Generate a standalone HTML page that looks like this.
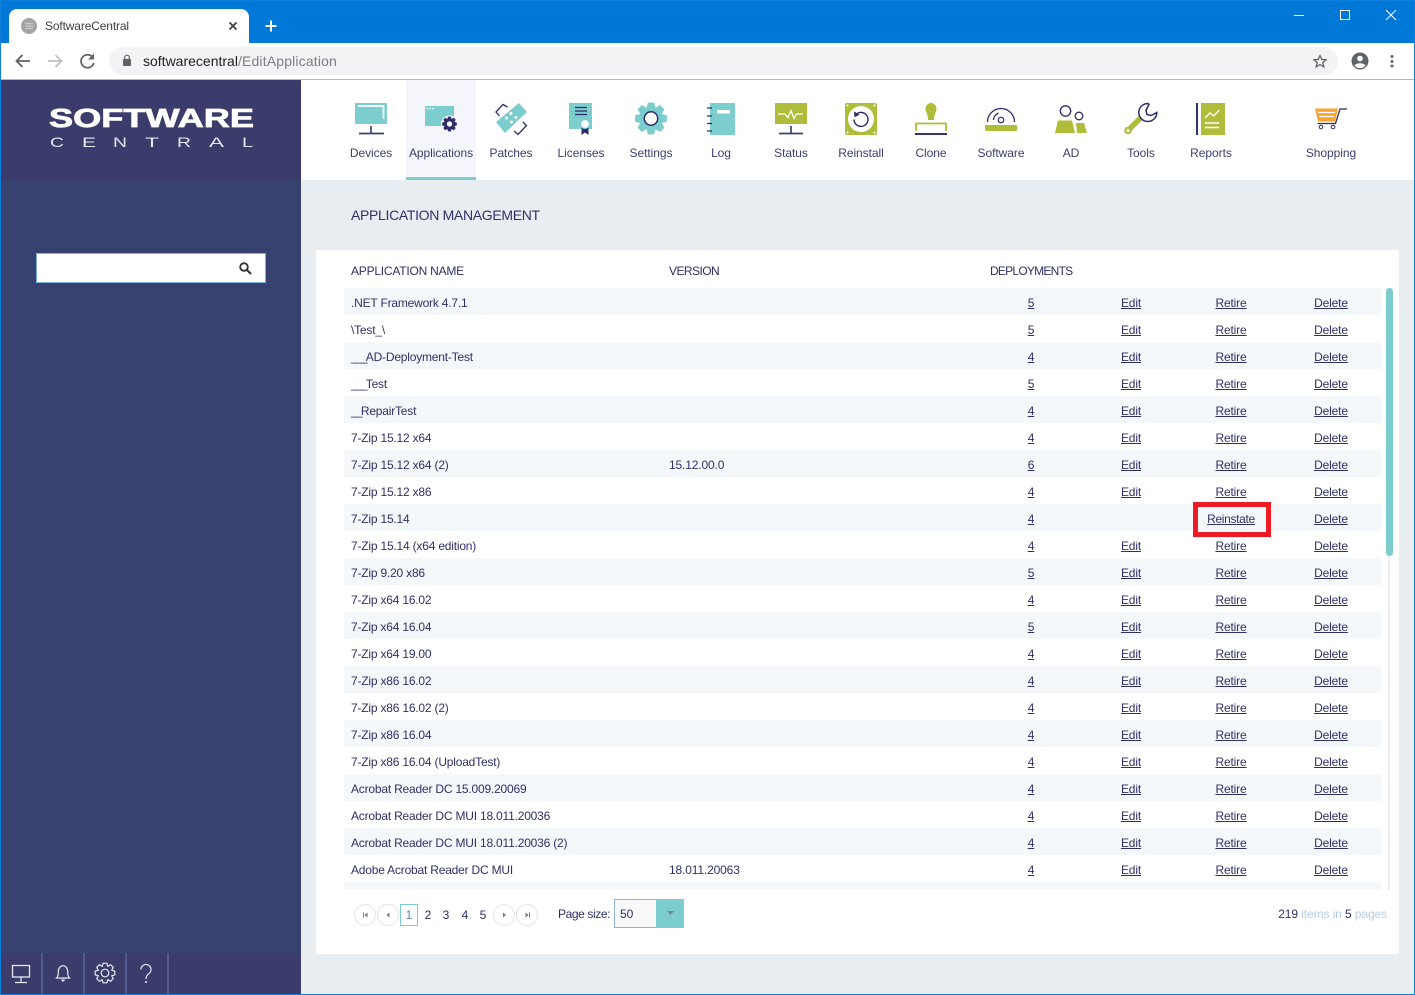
<!DOCTYPE html>
<html><head><meta charset="utf-8"><title>SoftwareCentral</title>
<style>
html,body{margin:0;padding:0;width:1415px;height:995px;overflow:hidden;background:#e8edf2;font-family:"Liberation Sans",sans-serif;font-size:12px;color:#2f3068}
.a{position:absolute}
#rows{position:absolute;left:344px;top:288px;width:1037px;height:602px;overflow:hidden}
.r{position:relative;height:27px;line-height:31px;white-space:nowrap}
.r:nth-child(odd){background:#f4f8fb}
.r i{font-style:normal;position:absolute;left:7px;letter-spacing:-.2px}
.r i b{font-weight:400;letter-spacing:-1.75px}
.r s{text-decoration:none;position:absolute;left:325px;letter-spacing:-.15px}
.r u{position:absolute;width:100px;text-align:center;text-decoration:none;letter-spacing:-.15px}
.r u span{text-decoration:underline}
.d{left:637px}.e{left:737px}.t{left:837px}.x{left:937px}
.n{position:absolute;top:146px;width:70px;text-align:center;color:#3b3f6e;line-height:14px;letter-spacing:-.05px}
.h{position:absolute;top:264px;line-height:14px;color:#2f3068;white-space:nowrap}
</style></head><body>
<!-- chrome -->
<div class="a" style="left:0;top:0;width:1415px;height:43px;background:#0078d7"></div>
<div class="a" style="left:9px;top:9px;width:240px;height:34px;background:#fff;border-radius:8px 8px 0 0"></div>
<div class="a" style="left:45px;top:19px;line-height:14px;color:#3c4043;letter-spacing:-.14px">SoftwareCentral</div>
<div class="a" style="left:0;top:43px;width:1415px;height:36px;background:#fff"></div>
<div class="a" style="left:0;top:79px;width:1415px;height:1px;background:#b9b9b9"></div>
<div class="a" style="left:109px;top:47px;width:1229px;height:28px;background:#f1f3f4;border-radius:14px"></div>
<div class="a" style="left:143px;top:53px;line-height:16px;font-size:14px;color:#202124;white-space:nowrap">softwarecentral<span style="color:#7b7f85;letter-spacing:.16px">/EditApplication</span></div>
<!-- sidebar -->
<div class="a" style="left:1px;top:80px;width:300px;height:100px;background:#3b3c6b"></div>
<div class="a" style="left:1px;top:180px;width:300px;height:773px;background:#374270"></div>
<div class="a" style="left:1px;top:953px;width:300px;height:41px;background:#3b3c6b"></div>
<div class="a" style="left:36px;top:253px;width:228px;height:28px;background:#fff;border:1px solid #7fb0dc"></div>
<div class="a" style="left:41px;top:953px;width:2px;height:41px;background:#4f5c8c"></div>
<div class="a" style="left:83px;top:953px;width:2px;height:41px;background:#4f5c8c"></div>
<div class="a" style="left:125px;top:953px;width:2px;height:41px;background:#4f5c8c"></div>
<div class="a" style="left:167px;top:953px;width:2px;height:41px;background:#4f5c8c"></div>
<!-- nav -->
<div class="a" style="left:301px;top:80px;width:1114px;height:100px;background:#fff"></div>
<div class="a" style="left:406px;top:80px;width:70px;height:97px;background:#f5f6fb"></div>
<div class="a" style="left:406px;top:177px;width:70px;height:3px;background:#7ccdce"></div>
<div class="n" style="left:336px">Devices</div>
<div class="n" style="left:406px">Applications</div>
<div class="n" style="left:476px">Patches</div>
<div class="n" style="left:546px">Licenses</div>
<div class="n" style="left:616px">Settings</div>
<div class="n" style="left:686px">Log</div>
<div class="n" style="left:756px">Status</div>
<div class="n" style="left:826px">Reinstall</div>
<div class="n" style="left:896px">Clone</div>
<div class="n" style="left:966px">Software</div>
<div class="n" style="left:1036px">AD</div>
<div class="n" style="left:1106px">Tools</div>
<div class="n" style="left:1176px">Reports</div>
<div class="n" style="left:1296px">Shopping</div>
<!-- main -->
<div class="a" style="left:351px;top:207px;font-size:14px;line-height:16px;color:#2f3068;white-space:nowrap;letter-spacing:-.32px">APPLICATION MANAGEMENT</div>
<div class="a" style="left:316px;top:250px;width:1083px;height:704px;background:#fff"></div>
<div class="h" style="left:351px;letter-spacing:-.22px">APPLICATION NAME</div>
<div class="h" style="left:669px;letter-spacing:-.55px">VERSION</div>
<div class="h" style="left:990px;letter-spacing:-.75px">DEPLOYMENTS</div>
<div id="rows">
<div class="r"><i>.NET Framework 4.7.1</i><u class="d"><span>5</span></u><u class="e"><span>Edit</span></u><u class="t"><span>Retire</span></u><u class="x"><span>Delete</span></u></div>
<div class="r"><i>\Test_\</i><u class="d"><span>5</span></u><u class="e"><span>Edit</span></u><u class="t"><span>Retire</span></u><u class="x"><span>Delete</span></u></div>
<div class="r"><i><b>___</b>AD-Deployment-Test</i><u class="d"><span>4</span></u><u class="e"><span>Edit</span></u><u class="t"><span>Retire</span></u><u class="x"><span>Delete</span></u></div>
<div class="r"><i><b>___</b>Test</i><u class="d"><span>5</span></u><u class="e"><span>Edit</span></u><u class="t"><span>Retire</span></u><u class="x"><span>Delete</span></u></div>
<div class="r"><i><b>__</b>RepairTest</i><u class="d"><span>4</span></u><u class="e"><span>Edit</span></u><u class="t"><span>Retire</span></u><u class="x"><span>Delete</span></u></div>
<div class="r"><i>7-Zip 15.12 x64</i><u class="d"><span>4</span></u><u class="e"><span>Edit</span></u><u class="t"><span>Retire</span></u><u class="x"><span>Delete</span></u></div>
<div class="r"><i>7-Zip 15.12 x64 (2)</i><s>15.12.00.0</s><u class="d"><span>6</span></u><u class="e"><span>Edit</span></u><u class="t"><span>Retire</span></u><u class="x"><span>Delete</span></u></div>
<div class="r"><i>7-Zip 15.12 x86</i><u class="d"><span>4</span></u><u class="e"><span>Edit</span></u><u class="t"><span>Retire</span></u><u class="x"><span>Delete</span></u></div>
<div class="r"><i>7-Zip 15.14</i><u class="d"><span>4</span></u><u class="t" style="letter-spacing:-.33px"><span>Reinstate</span></u><u class="x"><span>Delete</span></u></div>
<div class="r"><i>7-Zip 15.14 (x64 edition)</i><u class="d"><span>4</span></u><u class="e"><span>Edit</span></u><u class="t"><span>Retire</span></u><u class="x"><span>Delete</span></u></div>
<div class="r"><i>7-Zip 9.20 x86</i><u class="d"><span>5</span></u><u class="e"><span>Edit</span></u><u class="t"><span>Retire</span></u><u class="x"><span>Delete</span></u></div>
<div class="r"><i>7-Zip x64 16.02</i><u class="d"><span>4</span></u><u class="e"><span>Edit</span></u><u class="t"><span>Retire</span></u><u class="x"><span>Delete</span></u></div>
<div class="r"><i>7-Zip x64 16.04</i><u class="d"><span>5</span></u><u class="e"><span>Edit</span></u><u class="t"><span>Retire</span></u><u class="x"><span>Delete</span></u></div>
<div class="r"><i>7-Zip x64 19.00</i><u class="d"><span>4</span></u><u class="e"><span>Edit</span></u><u class="t"><span>Retire</span></u><u class="x"><span>Delete</span></u></div>
<div class="r"><i>7-Zip x86 16.02</i><u class="d"><span>4</span></u><u class="e"><span>Edit</span></u><u class="t"><span>Retire</span></u><u class="x"><span>Delete</span></u></div>
<div class="r"><i>7-Zip x86 16.02 (2)</i><u class="d"><span>4</span></u><u class="e"><span>Edit</span></u><u class="t"><span>Retire</span></u><u class="x"><span>Delete</span></u></div>
<div class="r"><i>7-Zip x86 16.04</i><u class="d"><span>4</span></u><u class="e"><span>Edit</span></u><u class="t"><span>Retire</span></u><u class="x"><span>Delete</span></u></div>
<div class="r"><i>7-Zip x86 16.04 (UploadTest)</i><u class="d"><span>4</span></u><u class="e"><span>Edit</span></u><u class="t"><span>Retire</span></u><u class="x"><span>Delete</span></u></div>
<div class="r"><i>Acrobat Reader DC 15.009.20069</i><u class="d"><span>4</span></u><u class="e"><span>Edit</span></u><u class="t"><span>Retire</span></u><u class="x"><span>Delete</span></u></div>
<div class="r"><i>Acrobat Reader DC MUI 18.011.20036</i><u class="d"><span>4</span></u><u class="e"><span>Edit</span></u><u class="t"><span>Retire</span></u><u class="x"><span>Delete</span></u></div>
<div class="r"><i>Acrobat Reader DC MUI 18.011.20036 (2)</i><u class="d"><span>4</span></u><u class="e"><span>Edit</span></u><u class="t"><span>Retire</span></u><u class="x"><span>Delete</span></u></div>
<div class="r"><i>Adobe Acrobat Reader DC MUI</i><s>18.011.20063</s><u class="d"><span>4</span></u><u class="e"><span>Edit</span></u><u class="t"><span>Retire</span></u><u class="x"><span>Delete</span></u></div>
<div class="r"></div>
</div>
<!-- scrollbar -->
<div class="a" style="left:1388px;top:288px;width:2px;height:602px;background:#e8edf2"></div>
<div class="a" style="left:1386px;top:288px;width:7px;height:268px;background:#7ccdce;border-radius:3.5px"></div>
<!-- red highlight -->
<div class="a" style="left:1193px;top:502px;width:68px;height:25px;border:5px solid #ed1c24"></div>
<!-- pager -->
<div class="a" style="left:400px;top:904px;width:16px;height:20px;border:1px solid #7ccdce"></div>
<div class="a" style="left:400px;top:908px;width:18px;text-align:center;line-height:14px;color:#5a86b8">1</div>
<div class="a" style="left:419px;top:908px;width:18px;text-align:center;line-height:14px">2</div>
<div class="a" style="left:437px;top:908px;width:18px;text-align:center;line-height:14px">3</div>
<div class="a" style="left:456px;top:908px;width:18px;text-align:center;line-height:14px">4</div>
<div class="a" style="left:474px;top:908px;width:18px;text-align:center;line-height:14px">5</div>
<div class="a" style="left:558px;top:907px;line-height:14px;white-space:nowrap;letter-spacing:-.4px">Page size:</div>
<div class="a" style="left:614px;top:899px;width:41px;height:27px;background:#f9f9f9;border:1px solid #8ab4d8"></div>
<div class="a" style="left:656px;top:899px;width:28px;height:29px;background:#7ccdce"></div>
<div class="a" style="left:620px;top:907px;line-height:14px">50</div>
<div class="a" style="right:28px;top:907px;line-height:14px;color:#b5cde6;white-space:nowrap;letter-spacing:-.1px"><span style="color:#2f3068">219</span> items in <span style="color:#2f3068">5</span> pages</div>
<!-- window border -->
<div class="a" style="left:0;top:0;width:1413px;height:993px;border:1px solid #0c7fdc"></div>
<!-- vector overlay -->
<svg class="a" style="left:0;top:0" width="1415" height="995" viewBox="0 0 1415 995" fill="none">
<!-- chrome icons -->
<circle cx="29" cy="26" r="8" fill="#a3a3a3"/><path d="M25 23.500h8M25 26h8M25 28.500h8" stroke="#c9c9c9" stroke-width="1.200"/>
<path d="M229.500 22.500l7 7M236.500 22.500l-7 7" stroke="#3c4043" stroke-width="1.700"/>
<path d="M271 20.500v11M265.500 26h11" stroke="#fff" stroke-width="2"/>
<path d="M30 61H17M22.500 55l-6 6 6 6" stroke="#5f6368" stroke-width="1.800"/>
<path d="M48 61h13M55.500 55l6 6-6 6" stroke="#bdc1c6" stroke-width="1.800"/>
<path d="M92.500 57a6.500 6.500 0 1 0 1.300 6" stroke="#5f6368" stroke-width="1.800"/><path d="M94 53.500v6h-6z" fill="#5f6368"/>
<rect x="123" y="59" width="8" height="7" rx="1" fill="#5f6368"/><path d="M124.700 59v-1.500a2.300 2.300 0 0 1 4.600 0V59" stroke="#5f6368" stroke-width="1.200"/>
<path d="M1320 55.500l1.700 3.900 4.300.4-3.200 2.800 1 4.200-3.800-2.200-3.800 2.200 1-4.200-3.200-2.800 4.300-.4z" stroke="#5f6368" stroke-width="1.300"/>
<circle cx="1360" cy="61" r="8.500" fill="#5f6368"/><circle cx="1360" cy="58.500" r="2.800" fill="#fff"/><path d="M1354.500 65.500c1.500-3 9.500-3 11 0a7 7 0 0 1-11 0z" fill="#fff"/>
<circle cx="1392" cy="56.500" r="1.500" fill="#5f6368"/><circle cx="1392" cy="61.500" r="1.500" fill="#5f6368"/><circle cx="1392" cy="66" r="1.500" fill="#5f6368"/>
<path d="M1294 15.500h10" stroke="#fff"/><rect x="1340.500" y="10.500" width="9" height="9" stroke="#fff"/><path d="M1386 10l10 10M1396 10l-10 10" stroke="#fff"/>
<!-- logo -->
<text x="49" y="127" font-family="Liberation Sans" font-weight="700" font-size="25.500" fill="#fff" stroke="#fff" stroke-width=".7" textLength="205" lengthAdjust="spacingAndGlyphs">SOFTWARE</text>
<g font-family="Liberation Sans" font-size="14" fill="#e4e6ef">
<text x="50" y="147" textLength="14" lengthAdjust="spacingAndGlyphs">C</text>
<text x="82" y="147" textLength="14" lengthAdjust="spacingAndGlyphs">E</text>
<text x="113" y="147" textLength="14" lengthAdjust="spacingAndGlyphs">N</text>
<text x="145" y="147" textLength="14" lengthAdjust="spacingAndGlyphs">T</text>
<text x="177" y="147" textLength="14" lengthAdjust="spacingAndGlyphs">R</text>
<text x="209" y="147" textLength="15" lengthAdjust="spacingAndGlyphs">A</text>
<text x="242" y="147" textLength="11" lengthAdjust="spacingAndGlyphs">L</text>
</g>
<!-- search icon -->
<circle cx="244" cy="267" r="3.800" stroke="#333" stroke-width="1.800"/><path d="M247 270l4 4" stroke="#333" stroke-width="2"/>
<!-- Devices -->
<rect x="355" y="103" width="32" height="21" fill="#7ccdce"/><path d="M358 106h25.500v13" stroke="#fff" stroke-width="1.700"/><path d="M371 126v7M359 133.500h25" stroke="#3b4075" stroke-width="1.700"/>
<!-- Applications -->
<rect x="425" y="106" width="29" height="20" fill="#7ccdce"/><path d="M426.500 108.500h1.500M429 108.500h1.500M432 108.500h1.500" stroke="#fff" stroke-width="1.500"/>
<circle cx="449.500" cy="124" r="8.500" fill="#f5f6fb"/>
<polygon transform="translate(449.500 124) scale(.75)" fill="#2c2c66" points="9.800,-1.900 9.800,1.900 6.650,2.760 8.300,5.600 5.600,8.300 2.760,6.650 1.900,9.800 -1.900,9.800 -2.760,6.650 -5.600,8.300 -8.300,5.600 -6.650,2.760 -9.800,1.900 -9.800,-1.900 -6.650,-2.760 -8.300,-5.600 -5.600,-8.300 -2.760,-6.650 -1.900,-9.800 1.900,-9.800 2.760,-6.650 5.600,-8.300 8.300,-5.600 6.650,-2.760"/><circle cx="449.500" cy="124" r="2.700" fill="#f5f6fb"/>
<!-- Patches -->
<polygon points="496,122 519,103 527,112 505,133" fill="#7ccdce"/><g fill="#fff"><circle cx="511" cy="113.500" r="1.500"/><circle cx="506.500" cy="118" r="1.500"/><circle cx="516" cy="117.500" r="1.500"/><circle cx="511.500" cy="122" r="1.500"/></g>
<path d="M499.500 116l-3.500-4 7-7.500 4.500 2.500M514 131l4 3.500 8.500-9-3.500-3.500" stroke="#2c2c66" stroke-width="1.300"/>
<!-- Licenses -->
<rect x="569" y="103" width="23" height="26" fill="#7ccdce"/><path d="M575 107.500h12M575 111h12M575 114.500h12" stroke="#2c2c66" stroke-width="1.300"/><path d="M581.500 126v9l3.500-2.500 3.500 2.500v-9z" fill="#2c2c66"/><circle cx="585" cy="124" r="4.500" fill="#fff" stroke="#7ccdce" stroke-width="1.200"/>
<!-- Settings -->
<polygon transform="translate(651 118.500) scale(1.620)" fill="#7ccdce" points="9.800,-1.900 9.800,1.900 6.650,2.760 8.300,5.600 5.600,8.300 2.760,6.650 1.900,9.800 -1.900,9.800 -2.760,6.650 -5.600,8.300 -8.300,5.600 -6.650,2.760 -9.800,1.900 -9.800,-1.900 -6.650,-2.760 -8.300,-5.600 -5.600,-8.300 -2.760,-6.650 -1.900,-9.800 1.900,-9.800 2.760,-6.650 5.600,-8.300 8.300,-5.600 6.650,-2.760"/><circle cx="651" cy="118.500" r="6.700" fill="#fff" stroke="#2c2c66" stroke-width="1.500"/>
<!-- Log -->
<rect x="710" y="103" width="25" height="32" fill="#7ccdce"/><rect x="717" y="110" width="13" height="3.500" fill="#fff"/><path d="M707 108h5M707 116h5M707 123.500h5M707 131h5" stroke="#2c2c66" stroke-width="1.300"/>
<!-- Status -->
<rect x="775" y="103" width="32" height="21" fill="#afbd3a"/><path d="M778 114h7l3 3.500 3-7 3 8 2.500-4.500h6.500" stroke="#fff" stroke-width="1.300"/><path d="M791 126v7M779 133.500h24" stroke="#3b4075" stroke-width="1.700"/>
<!-- Reinstall -->
<rect x="845" y="103" width="32" height="32" rx="2" fill="#afbd3a"/><circle cx="861" cy="119" r="13" fill="#fff"/><path d="M856 114.500a7 7 0 1 1-2 5" stroke="#2c2c66" stroke-width="1.400"/><path d="M854 111.500l5.500 3.200-5 2.500z" fill="#2c2c66"/>
<g fill="#fff"><circle cx="847.500" cy="105.500" r="1"/><circle cx="874.500" cy="105.500" r="1"/><circle cx="847.500" cy="132.500" r="1"/><circle cx="874.500" cy="132.500" r="1"/></g>
<!-- Clone -->
<path d="M925.500 109a5.500 6 0 1 1 11 0c0 3-2.500 5-2.500 11h-6c0-6-2.500-8-2.500-11z" fill="#afbd3a"/><path d="M916 131v-7.500h30v7.500" stroke="#afbd3a" stroke-width="1.800"/><path d="M915 134h32" stroke="#2f3575" stroke-width="2"/>
<!-- Software -->
<rect x="985" y="125" width="32" height="6" rx="1" fill="#afbd3a"/><path d="M987.500 122a13.500 13.500 0 0 1 27 0M993.500 120a8 8 0 0 1 5-7" stroke="#2c2c66" stroke-width="1.300"/><circle cx="1001" cy="120" r="2.800" stroke="#2c2c66" stroke-width="1.200"/>
<!-- AD -->
<circle cx="1065.500" cy="111" r="5.200" stroke="#2c2c66" stroke-width="1.300"/><circle cx="1079" cy="116" r="3.800" stroke="#2c2c66" stroke-width="1.300"/><path d="M1058 120.500h14l3 12.500h-20z" fill="#afbd3a"/><path d="M1076 123h8l3 10h-10z" fill="#afbd3a"/>
<!-- Tools -->
<path d="M1128 130.500l14-14" stroke="#afbd3a" stroke-width="5.500"/><circle cx="1128" cy="130.500" r="3.800" fill="#afbd3a"/><circle cx="1128" cy="130.500" r="1.600" fill="#fff"/>
<path d="M1148 103.500a9 9 0 1 0 8.800 9l-5.800 3-4-1-1-4 3-6.200z" fill="#fff" stroke="#2c2c66" stroke-width="1.500"/>
<!-- Reports -->
<path d="M1197 103v32" stroke="#2f3575" stroke-width="2"/><rect x="1201" y="103" width="24" height="32" fill="#afbd3a"/><path d="M1205 118l5-5 3.500 3 6-6" stroke="#fff" stroke-width="1.300"/><path d="M1205 123h14M1205 127.500h14" stroke="#fff" stroke-width="1.500"/>
<!-- Shopping -->
<path d="M1315 108.500h23l-3 13h-17z" fill="#f9a530"/><path d="M1318 112.500h17M1319 116.500h15" stroke="#fff" stroke-width="1.200"/><path d="M1347 109h-7l-4.500 14.500h-18" stroke="#2c2c66" stroke-width="1.300"/><circle cx="1321" cy="127" r="1.800" stroke="#2c2c66"/><circle cx="1333" cy="127" r="1.800" stroke="#2c2c66"/>
<!-- pager buttons -->
<g stroke="#e4e4e4" fill="#fff"><circle cx="365" cy="915" r="10.500"/><circle cx="388" cy="915" r="10.500"/><circle cx="504" cy="915" r="10.500"/><circle cx="527" cy="915" r="10.500"/></g>
<g fill="#777"><path d="M367.500 912.500v5l-3-2.500z"/><rect x="363" y="912.500" width="1" height="5"/><path d="M389.500 912.500v5l-3-2.500z"/><path d="M503 912.500v5l3-2.500z"/><path d="M525.500 912.500v5l3-2.500z"/><rect x="529" y="912.500" width="1" height="5"/></g>
<path d="M667 911h7l-3.500 4z" fill="#6f8a90"/>
<!-- bottom icons -->
<rect x="12.500" y="965.500" width="17" height="11.500" stroke="#e6e8f0" stroke-width="1.300"/><path d="M21 977v5M15 982.500h12" stroke="#e6e8f0" stroke-width="1.200"/>
<path d="M56.500 978c1.800-2 1.800-4 1.800-6.500a4.700 5.800 0 0 1 9.400 0c0 2.500 0 4.500 1.800 6.500z" stroke="#e6e8f0" stroke-width="1.200"/><path d="M60.500 979.500h5l-2.500 2.500z" fill="#e6e8f0"/>
<polygon transform="translate(105 973)" stroke="#e6e8f0" stroke-width="1.200" stroke-linejoin="round" points="9.800,-1.900 9.800,1.900 6.650,2.760 8.300,5.600 5.600,8.300 2.760,6.650 1.900,9.800 -1.900,9.800 -2.760,6.650 -5.600,8.300 -8.300,5.600 -6.650,2.760 -9.800,1.900 -9.800,-1.900 -6.650,-2.760 -8.300,-5.600 -5.600,-8.300 -2.760,-6.650 -1.900,-9.800 1.900,-9.800 2.760,-6.650 5.600,-8.300 8.300,-5.600 6.650,-2.760"/><circle cx="105" cy="973" r="3.800" stroke="#e6e8f0" stroke-width="1.200"/>
<path d="M141 969.500a5 5 0 1 1 8 4c-2 1.500-3 3-3 5.500" stroke="#e6e8f0" stroke-width="1.200"/><circle cx="146" cy="982" r="1" fill="#e6e8f0"/>
</svg>
</body></html>
